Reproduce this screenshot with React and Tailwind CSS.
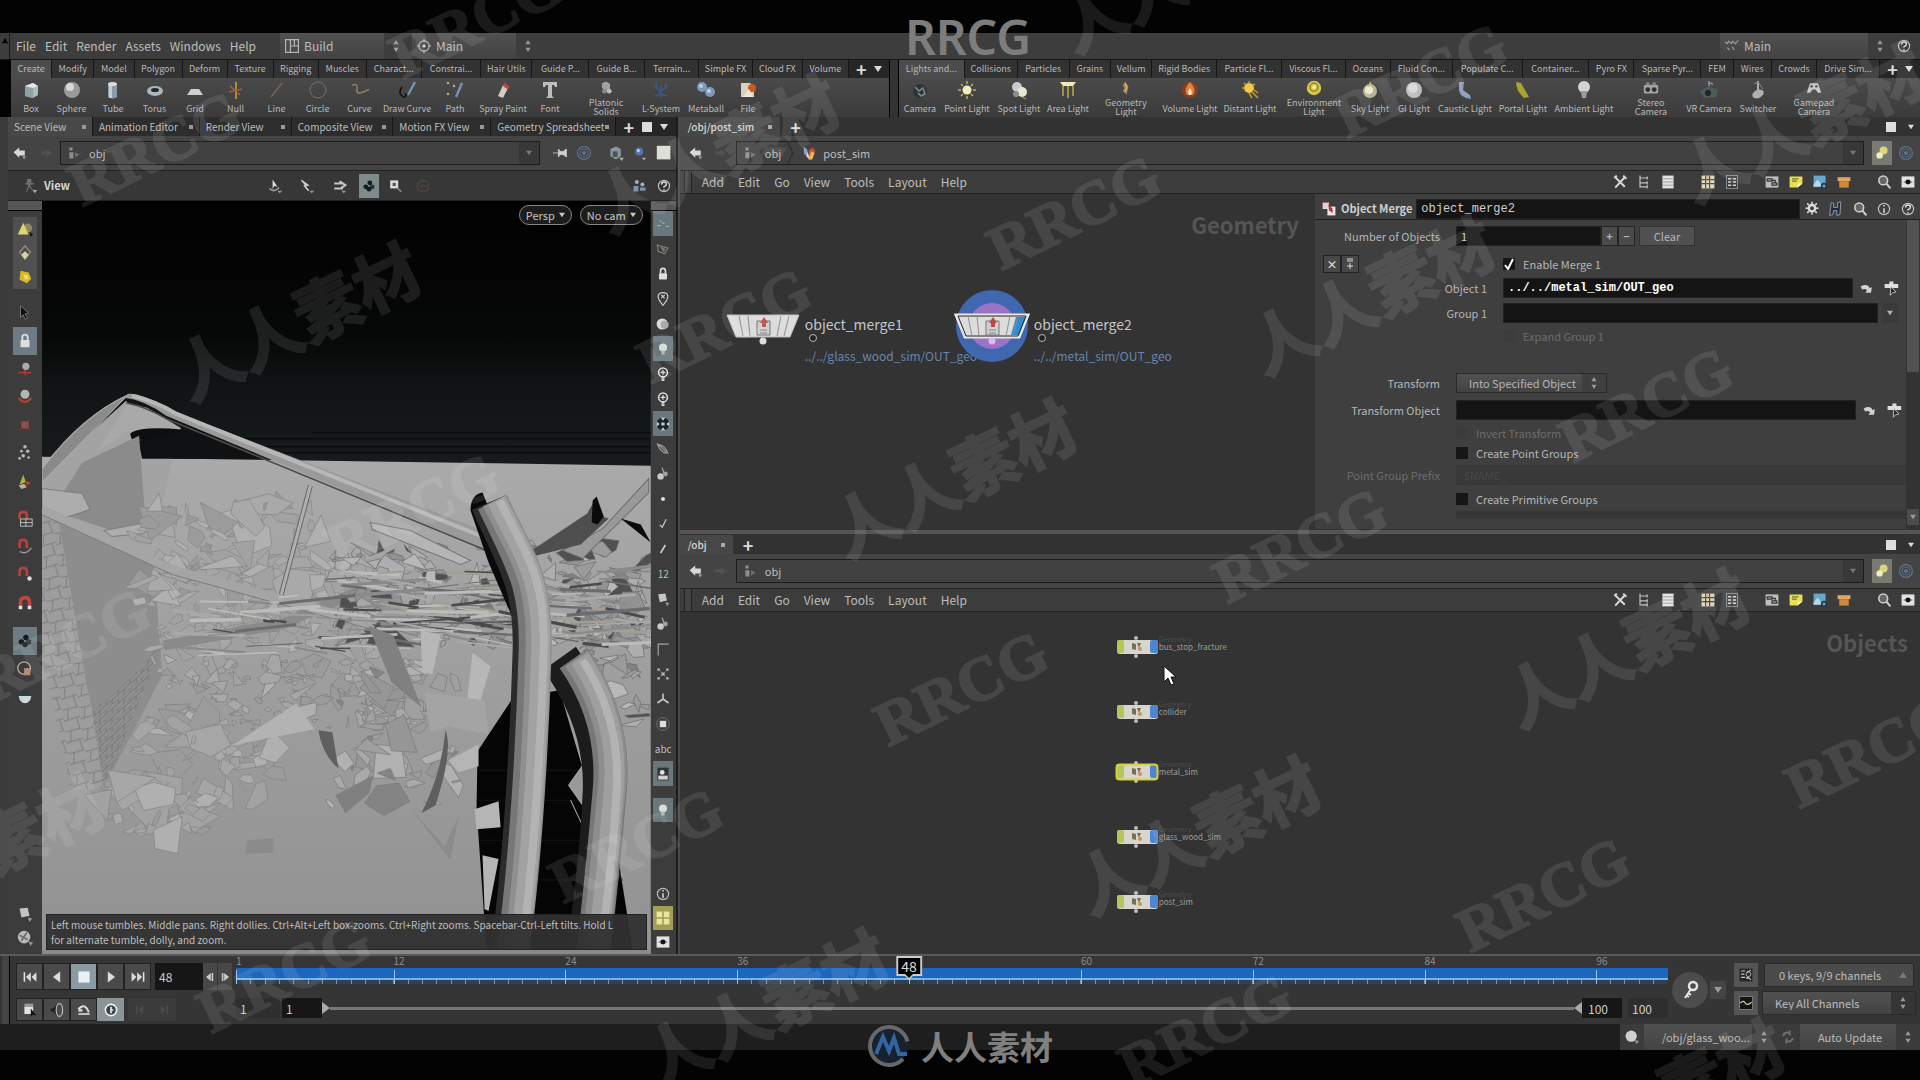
import React, { useState } from 'react';

const LEFT_SHELF_TABS = [
  ['Create', 41], ['Modify', 42], ['Model', 40], ['Polygon', 48], ['Deform', 45], ['Texture', 46],
  ['Rigging', 45], ['Muscles', 48], ['Charact...', 55], ['Constrai...', 60], ['Hair Utils', 51],
  ['Guide P...', 57], ['Guide B...', 56], ['Terrain...', 54], ['Simple FX', 54], ['Cloud FX', 50], ['Volume', 46],
];

const RIGHT_SHELF_TABS = [
  ['Lights and...', 66], ['Collisions', 53], ['Particles', 52], ['Grains', 41], ['Vellum', 41],
  ['Rigid Bodies', 65], ['Particle Fl...', 65], ['Viscous Fl...', 64], ['Oceans', 45], ['Fluid Con...', 62],
  ['Populate C...', 70], ['Container...', 67], ['Pyro FX', 45], ['Sparse Pyr...', 67], ['FEM', 32],
  ['Wires', 38], ['Crowds', 45], ['Drive Sim...', 63],
];

const LEFT_TOOLS = [
  ['Box', 40, 'box'], ['Sphere', 41, 'sphere'], ['Tube', 42, 'tube'], ['Torus', 41, 'torus'], ['Grid', 40, 'grid'],
  ['Null', 41, 'null'], ['Line', 41, 'line'], ['Circle', 41, 'circle'], ['Curve', 43, 'curve'],
  ['Draw Curve', 52, 'draw'], ['Path', 44, 'path'], ['Spray Paint', 52, 'spray'], ['Font', 42, 'font'],
  ['Platonic Solids', 70, 'platonic'], ['L-System', 40, 'lsystem'], ['Metaball', 50, 'metaball'], ['File', 34, 'file'],
];

const RIGHT_TOOLS = [
  ['Camera', 42, 'camera'], ['Point Light', 52, 'sun'], ['Spot Light', 52, 'spot'], ['Area Light', 46, 'area'],
  ['Geometry Light', 70, 'geoLight'], ['Volume Light', 58, 'flame'], ['Distant Light', 62, 'distant'],
  ['Environment Light', 66, 'env'], ['Sky Light', 46, 'sky'], ['GI Light', 42, 'gi'], ['Caustic Light', 60, 'caustic'],
  ['Portal Light', 56, 'portal'], ['Ambient Light', 66, 'bulb'], ['Stereo Camera', 68, 'stereo'],
  ['VR Camera', 48, 'vr'], ['Switcher', 50, 'switcher'], ['Gamepad Camera', 62, 'gamepad'],
];

const SCENE_TABS = [
  ['Scene View', 82], ['Animation Editor', 107], ['Render View', 90], ['Composite View', 101],
  ['Motion FX View', 97], ['Geometry Spreadsheet', 127],
];

const NETWORK_MENU = ['Add', 'Edit', 'Go', 'View', 'Tools', 'Layout', 'Help'];

const OBJECT_NODES = [
  { name: 'bus_stop_fracture', top: 27 },
  { name: 'collider', top: 92 },
  { name: 'metal_sim', top: 152, selected: true },
  { name: 'glass_wood_sim', top: 217 },
  { name: 'post_sim', top: 282 },
];

const MARKS = [
  ['RRCG', 476, 20], ['RRCG', 1420, 80], ['RRCG', 1074, 212], ['RRCG', 155, 148], ['RRCG', 724, 325],
  ['RRCG', 412, 510], ['RRCG', 1646, 404], ['RRCG', 1300, 545], ['RRCG', 64, 645], ['RRCG', 961, 688],
  ['RRCG', 1872, 750], ['RRCG', 636, 845], ['RRCG', 1543, 894], ['RRCG', 284, 975], ['RRCG', 1205, 1030],
  ['人人素材', 296, 318], ['人人素材', 952, 475], ['人人素材', 715, 150], ['人人素材', 1370, 292],
  ['人人素材', 1800, 120], ['人人素材', 1196, 832], ['人人素材', 1625, 645], ['人人素材', 764, 1005],
  ['人人素材', -20, 850], ['人人素材', 1660, 1095], ['人人素材', 1180, -30],
];

const ART = {
  box: <><path d="M4 6l8-3 5 3v9l-5 3-8-2z" fill="#aebcbf" /><path d="M4 6l8 2v10l-8-2z" fill="#8fa0a5" /><path d="M4 6l8-3 5 3-5 2z" fill="#dfe8ea" /></>,
  sphere: <><circle cx="10" cy="10" r="8" fill="#9a9a9a" /><circle cx="8" cy="7" r="4" fill="#d8d8d8" /></>,
  tube: <><path d="M5 4v13q5 3 9 0V4z" fill="#8e99a6" /><path d="M6 5h3v13H6z" fill="#c4ccd4" /><ellipse cx="9.500" cy="4" rx="4.500" ry="2" fill="#d8dde2" /></>,
  torus: <><ellipse cx="10" cy="11" rx="8" ry="5" fill="#a9b6bd" /><ellipse cx="10" cy="10" rx="4" ry="2" fill="#23282c" /></>,
  grid: <path d="M6 9h8l4 6H2z" fill="#cfcfcf" />,
  null: <g strokeWidth="1.500"><path d="M10 2v17" stroke="#d9a23a" /><path d="M3 12l13-3" stroke="#b8542f" /><path d="M4 6l10 9" stroke="#9c6a35" /></g>,
  line: <path d="M4 17L15 3" stroke="#7a6258" strokeWidth="1.500" />,
  circle: <circle cx="10" cy="10" r="8" fill="none" stroke="#707070" />,
  curve: <path d="M2 5q6-2 5 4t6 3 5-2" fill="none" stroke="#8c8365" strokeWidth="1.500" />,
  draw: <><path d="M5 7q-4 6 0 9t4-3" fill="none" stroke="#111" strokeWidth="1.500" /><path d="M18 2l-7 13" stroke="#6e93b5" strokeWidth="2.500" /></>,
  path: <><path d="M17 3l-6 14" stroke="#6e93b5" strokeWidth="2.500" /><circle cx="3" cy="3" r="1.300" fill="#b8b060" /><circle cx="9" cy="6" r="1.300" fill="#b8b060" /><circle cx="3" cy="14" r="1.300" fill="#b8b060" /></>,
  spray: <><path d="M10 5l5 3-5 10-5-2z" fill="#d6cbc6" /><path d="M11 2l6 5-3 2-4-3z" fill="#b04a44" /></>,
  font: <path d="M3 2h14v5h-2l-1-2h-2v11l2 2H6l2-2V5H6L5 7H3z" fill="#bdbdbd" />,
  platonic: <><path d="M5 4l5-2 5 3v6l-5 3-5-4z" fill="#a2a2a2" /><circle cx="8" cy="14" r="3" fill="#8a8a8a" /><circle cx="14" cy="14" r="3" fill="#bcbcbc" /></>,
  lsystem: <path d="M10 18V6M10 12L3 6M10 11l7-6M10 14l-6 2M10 14l6 2M6 8L5 3M14 8l1-5" stroke="#3a5c87" strokeWidth="1.500" fill="none" />,
  metaball: <><circle cx="6" cy="7" r="5" fill="#7c97b8" /><circle cx="14" cy="12" r="5" fill="#7c97b8" /><circle cx="5" cy="6" r="2" fill="#bed0e6" /><circle cx="13" cy="11" r="2" fill="#bed0e6" /></>,
  file: <><path d="M3 3h9l4 4v10H3z" fill="#dbd0bd" /><circle cx="14" cy="8" r="4" fill="#cc5a28" /><path d="M5 17l6-8 4 8z" fill="#efe8d8" /></>,
  camera: <><circle cx="10" cy="11" r="7" fill="#2e3538" /><path d="M5 7l4 4 4-3 2 6-4 2-3-3" stroke="#7d8c90" fill="none" strokeWidth="1.500" /></>,
  sun: <><circle cx="10" cy="10" r="4.500" fill="#f1edc0" /><path d="M10 1v3M10 16v3M1 10h3M16 10h3M4 4l2 2M14 14l2 2M16 4l-2 2M4 16l2-2" stroke="#b9b05c" strokeWidth="1.500" /></>,
  spot: <><circle cx="8" cy="7" r="5" fill="#c9c9c9" /><circle cx="13" cy="12" r="5" fill="#e8e6cf" /><circle cx="7" cy="14" r="3" fill="#8c8c8c" /><path d="M13 17l4 2" stroke="#b8a840" /></>,
  area: <><path d="M2 2h16l-3 4H5z" fill="#f0eab8" /><path d="M5 6v10M10 6v12M15 6v10" stroke="#c1a649" strokeWidth="1.500" /></>,
  geoLight: <><path d="M9 2l4 6-2 10-5-4 2-4-2-3z" fill="#a9865a" /><path d="M9 4l2 5-2 5" fill="none" stroke="#e4cda5" /></>,
  flame: <><circle cx="10" cy="10" r="8" fill="#8c3d22" /><path d="M10 2q7 7 3 13H7Q3 9 10 2z" fill="#e2843e" /><path d="M10 8q3 4 1 7H9q-2-3 1-7z" fill="#fbe8c4" /></>,
  distant: <><circle cx="9" cy="8" r="5" fill="#ecc94d" /><path d="M9 1v3M2 8h3M4 3l2 2M15 4l-2 1M12 12l6 6M9 13l3 5M14 10l4 3" stroke="#c79c2e" strokeWidth="1.500" /></>,
  env: <><circle cx="10" cy="10" r="9" fill="#d7c94a" /><circle cx="10" cy="9" r="5" fill="none" stroke="#7f7a2c" strokeWidth="1.500" /><circle cx="10" cy="9" r="2" fill="#fff8b8" /></>,
  sky: <><circle cx="10" cy="11" r="7" fill="#b8b490" /><circle cx="9" cy="10" r="4" fill="#ece9d5" /><path d="M10 1l2 5-4 1z" fill="#d0c170" /></>,
  gi: <><circle cx="10" cy="10" r="8" fill="#bcbcbc" /><circle cx="9" cy="8" r="5" fill="#dadada" /></>,
  caustic: <path d="M4 2h5l-1 8 7 5 1 4q-11-1-12-9z" fill="#8ea3bb" />,
  portal: <path d="M3 2l5 1 8 14-5 1Q3 11 3 2z" fill="#a9a433" />,
  bulb: <><circle cx="10" cy="7" r="6" fill="#d2d2d2" /><path d="M7 11h6l-1 7H8z" fill="#9d9d9d" /></>,
  stereo: <><rect x="1" y="6" width="18" height="11" rx="2" fill="#a3a3a3" /><circle cx="6" cy="12" r="3" fill="#303030" /><circle cx="14" cy="12" r="3" fill="#303030" /><path d="M4 3h4v3H4zM12 3h4v3h-4z" fill="#8d8d8d" /></>,
  vr: <><path d="M1 11l9-5 9 4-2 7-12 1z" fill="#4d5b5d" /><circle cx="9" cy="13" r="3" fill="#1f2526" /><path d="M10 6V1M10 3l4 1" stroke="#87989b" strokeWidth="1.500" /></>,
  switcher: <><path d="M10 1v9" stroke="#d0d0d0" strokeWidth="1.500" /><ellipse cx="10" cy="14" rx="6" ry="4" fill="#b0b0b0" transform="rotate(-25 10 14)" /><path d="M6 4l4-2 5 7" stroke="#888" fill="none" /></>,
  gamepad: <><path d="M5 4h10l4 12h-4l-3-4H8l-3 4H1z" fill="#c6c6c6" /><circle cx="7" cy="8" r="1.500" fill="#3a3a3a" /><circle cx="13" cy="8" r="1.500" fill="#3a3a3a" /></>,
  back: <><path d="M2 9l7-6v4h7v6H9v3z" fill="#d8d8d8" /><path d="M13 14h5l-3 4z" fill="#999" /></>,
  forward: <path d="M17 10l-6-5v3H4v4h7v3z" fill="#525252" />,
  scene: <><path d="M3 3h4v4H3zM3 9h5v8H3z" fill="#8e8e8e" /><path d="M10 9l6 3-6 4z" fill="#6d6d6d" /></>,
  geo: <><path d="M3 2l5 4v9L4 11z" fill="#8ba4cc" /><path d="M10 6l5-3 3 5-4 9-5 1z" fill="#c8502f" /><path d="M9 18l4-10 4 2-3 8z" fill="#e0bb57" /><path d="M8 8l3 9-4-2z" fill="#ddd" /></>,
  pin: <path d="M1 10h7M8 5v10l2-3h4l4 3V5l-4 3h-4z" stroke="#d0d0d0" fill="#d0d0d0" />,
  target: <g fill="none" stroke="#5b7390"><circle cx="10" cy="10" r="8" strokeWidth="1.500" /><circle cx="10" cy="10" r="5" /><circle cx="10" cy="10" r="2" fill="#5b7390" /></g>,
  cube: <><path d="M3 5l7-3 6 3v9l-6 4-7-4z" fill="#87989c" /><path d="M6 8h6v7H6z" fill="#46565c" /><path d="M14 16h6l-3 4z" fill="#aaa" /></>,
  ball: <><circle cx="9" cy="8" r="5" fill="#5474ae" /><circle cx="8" cy="7" r="2" fill="#b7caec" /><path d="M12 16h6l-3 3z" fill="#aaa" /></>,
  square: <rect x="1" y="1" width="17" height="17" fill="#deded8" />,
  walk: <><path d="M7 2h4v4H7zM4 7l5 1 6-1M9 8l-3 9M9 9l4 6" stroke="#6f6f6f" fill="#6f6f6f" strokeWidth="1.500" /><path d="M13 15h6l-3 4z" fill="#aaa" /></>,
  cursorSpin: <><path d="M7 2l6 9-4-1-2 4z" fill="#ddd" /><path d="M3 13q6 6 12-1" stroke="#999" fill="none" strokeWidth="2" /><path d="M13 16h6l-3 3z" fill="#999" /></>,
  cursorMove: <><path d="M3 3l8 6-4 1 5 6" stroke="#ccc" strokeWidth="2" fill="#ccc" /><path d="M13 16h6l-3 3z" fill="#999" /></>,
  loop: <><path d="M4 7h9l-2-3 7 5-6 4M15 13H4" stroke="#c4c4c4" fill="none" strokeWidth="2.500" /><path d="M13 16h6l-3 3z" fill="#999" /></>,
  blobs: <><circle cx="6" cy="11" r="3" fill="#171b1e" /><circle cx="11" cy="6" r="3" fill="#171b1e" /><circle cx="14" cy="11" r="3" fill="#2c3539" /><circle cx="10" cy="14" r="3" fill="#171b1e" /></>,
  zoomBox: <><rect x="4" y="3" width="10" height="10" fill="#dcdcdc" /><rect x="7" y="6" width="4" height="4" fill="#555" /><path d="M13 13l5 4" stroke="#888" strokeWidth="2" /></>,
  ghost: <><circle cx="10" cy="10" r="7" fill="none" stroke="#51403f" strokeWidth="2" /><path d="M6 10h8" stroke="#51403f" strokeWidth="2" /></>,
  people: <><circle cx="6" cy="5" r="2.500" fill="#9eb0c4" /><circle cx="13" cy="8" r="2.500" fill="#9eb0c4" /><path d="M2 10h6v7H2zM10 12h7v4h-7z" fill="#8093a8" /></>,
  cone: <><circle cx="13" cy="9" r="5" fill="#8f8a62" /><path d="M8 3l6 13H2z" fill="#e2d36c" /><path d="M15 13l4 3-3 3z" fill="#151515" /></>,
  diamond: <><path d="M10 2l6 7-6 8-6-8z" fill="none" stroke="#8f8d7c" strokeWidth="1.500" /><path d="M10 8l4 4-4 5-4-5z" fill="#ddd5a0" /></>,
  gem: <><path d="M5 3l9 2 3 7-5 5-8-4z" fill="#d7b82a" /><path d="M8 7l5 1 1 4-4 1z" fill="#f1dc66" /></>,
  arrow: <path d="M5 2l9 8-4 1 3 5-3 1-2-5-3 3z" fill="#111" stroke="#777" />,
  lock: <><rect x="5" y="9" width="10" height="8" rx="1" fill="#dedede" /><path d="M7 9V6q0-3 3-3t3 3v3" stroke="#dedede" fill="none" strokeWidth="2" /></>,
  move: <><path d="M3 14h14M10 8v9" stroke="#a63a30" strokeWidth="2" /><circle cx="11" cy="7" r="4" fill="#aaa" /></>,
  rotate: <><path d="M3 11q6 9 14 0" stroke="#a9442f" strokeWidth="2.500" fill="none" /><circle cx="10" cy="7" r="5" fill="#b4b4b4" /></>,
  scale: <><path d="M4 5l12 10M4 16L15 4" stroke="#7c302b" strokeWidth="2" /><rect x="6" y="6" width="8" height="8" fill="#8a5049" /></>,
  dots: <g fill="#b5b5b5"><circle cx="10" cy="3" r="2" /><circle cx="6" cy="8" r="1.500" /><circle cx="13" cy="8" r="2" /><circle cx="8" cy="13" r="2" /><circle cx="14" cy="15" r="1.500" /><circle cx="4" cy="16" r="1.500" /></g>,
  prism: <><path d="M8 3l3 8-7 3z" fill="#a7b83a" /><path d="M10 10l7 2-5 3z" fill="#c3402c" /><path d="M3 15l6-2 3 4-6 2z" fill="#b5b5a0" /></>,
  magnetGrid: <><path d="M4 10V6q0-4 4-4t4 4v4" stroke="#b8413a" strokeWidth="3" fill="none" /><path d="M5 10h13v8H5zM5 14h13M11 10v8" stroke="#c7c7c7" fill="none" /></>,
  magnetCurve: <><path d="M4 11V6q0-4 4-4t4 4v5" stroke="#b8413a" strokeWidth="3" fill="none" /><path d="M4 15q8 4 13-4" stroke="#999" fill="none" strokeWidth="1.500" /></>,
  magnetDot: <><path d="M4 11V6q0-4 4-4t4 4v5" stroke="#b8413a" strokeWidth="3" fill="none" /><circle cx="15" cy="14" r="2.500" fill="#ddd" /></>,
  magnet: <><path d="M5 14V9q0-5 5-5t5 5v5" stroke="#c2443c" strokeWidth="4" fill="none" /><path d="M3 13h4v4H3zM13 13h4v4h-4z" fill="#ddd" /></>,
  inspect: <><circle cx="9" cy="9" r="7" fill="none" stroke="#b5a79c" strokeWidth="1.500" /><path d="M9 9h7v8H9z" fill="#b98a7c" /></>,
  bowl: <><path d="M3 9h14q-1 8-7 8T3 9z" fill="#ced8d6" /><path d="M7 2h6l2 6H5z" fill="#2c3c3c" /></>,
  chip: <><path d="M4 4l9-1 2 9-9 2z" fill="#c4c4c4" /><path d="M13 14l5 1-3 4z" fill="#999" /></>,
  wheel: <><circle cx="9" cy="9" r="7" fill="#b9b9b9" /><path d="M4 7l9 5M12 4l-6 9" stroke="#707070" strokeWidth="2" /><path d="M14 14l5 1-3 4z" fill="#999" /></>,
  plane: <><path d="M3 5l13 4-4 7-8-3z" fill="none" stroke="#7b8476" strokeWidth="1.500" /><path d="M6 7l7 3-2 4z" fill="#7b8476" /></>,
  dash: <path d="M3 12h4M9 9h3M14 13h3M6 6l2 1" stroke="#9fb4bd" strokeWidth="1.500" />,
  marker: <><path d="M10 18Q4 11 4 7q0-5 6-5t6 5q0 4-6 11z" fill="none" stroke="#c9c9c9" strokeWidth="1.500" /><path d="M8 5l4 4M12 5L8 9" stroke="#c9c9c9" strokeWidth="1.500" /></>,
  moon: <><circle cx="9" cy="10" r="7" fill="#dadada" /><circle cx="12" cy="11" r="5" fill="#aaa" /></>,
  lamp: <><circle cx="10" cy="8" r="5" fill="#d8ddda" /><path d="M8 12h4v5H8z" fill="#b0b6b4" /></>,
  plusLamp: <><circle cx="10" cy="8" r="5.500" fill="none" stroke="#dcdcdc" strokeWidth="2" /><path d="M7 8h6M10 5v6M9 14h2v4H9z" stroke="#dcdcdc" strokeWidth="1.500" /></>,
  checker: <><circle cx="10" cy="10" r="8" fill="#1b2124" /><path d="M7 2h6l-3 4zM7 18h6l-3-4zM2 7v6l4-3zM18 7v6l-4-3zM8 8h4v4H8z" fill="#c0ccd0" /></>,
  leaf: <path d="M3 4q9 1 13 11-8 1-13-11zM5 5l9 9" fill="none" stroke="#9a9a9a" strokeWidth="1.500" />,
  cluster: <><circle cx="7" cy="13" r="4" fill="#c9c9c9" /><circle cx="13" cy="10" r="3" fill="#a0a0a0" /><path d="M9 2l2 7" stroke="#aaa" strokeWidth="1.500" /></>,
  dot: <circle cx="10" cy="10" r="2.500" fill="#e0e0e0" />,
  tick: <path d="M6 11l3 3 5-10" stroke="#cfcfcf" fill="none" strokeWidth="1.500" />,
  slash: <path d="M7 15l6-10" stroke="#cfcfcf" strokeWidth="2" />,
  corner: <path d="M4 18V4h13" stroke="#a5a5a5" fill="none" strokeWidth="1.500" />,
  nodes: <><path d="M4 4l12 12M16 4L4 16" stroke="#777" /><g fill="#b5b5b5"><path d="M3 3h3v3H3zM14 3h3v3h-3zM3 14h3v3H3zM14 14h3v3h-3zM8 8h4v4H8z" /></g></>,
  tri: <path d="M10 10V3M10 10l7 5M10 10l-7 5" stroke="#c9c9c9" strokeWidth="2" />,
  disc: <><circle cx="10" cy="10" r="8" fill="none" stroke="#777" /><rect x="6" y="6" width="8" height="8" fill="#dcdcdc" /></>,
  ghostBox: <><rect x="3" y="2" width="14" height="16" fill="#2d373b" /><circle cx="9" cy="8" r="3" fill="#e0e0e0" /><path d="M4 12h12v5H4z" fill="#cfcfcf" /></>,
  gold: <><rect x="2" y="2" width="7" height="7" fill="#e9e4a0" /><rect x="11" y="2" width="7" height="7" fill="#e9e4a0" /><rect x="2" y="11" width="7" height="7" fill="#e9e4a0" /><rect x="11" y="11" width="7" height="7" fill="#e9e4a0" /></>,
  eye: <><rect x="2" y="3" width="16" height="14" fill="#e2e2e2" /><path d="M4 10q6-5 12 0-6 5-12 0z" fill="#8f8f8f" /><circle cx="10" cy="10" r="3" fill="#111" /></>,
  info: <><circle cx="10" cy="10" r="7" fill="none" stroke="#bdbdbd" strokeWidth="1.500" /><path d="M10 5v2M10 9v6" stroke="#d0d0d0" strokeWidth="2" /></>,
  help: <><circle cx="10" cy="10" r="7" fill="none" stroke="#bdbdbd" strokeWidth="1.500" /><path d="M7 8q0-3 3-3t3 2.500-3 3.500v1M10 14v2" stroke="#e0e0e0" strokeWidth="1.800" fill="none" /></>,
  tools: <path d="M3 3l13 13M4 17L16 4M3 5l3-3M14 2l4 4" stroke="#d8d8d8" strokeWidth="2.500" />,
  tree: <path d="M5 2v15M5 5h9M5 11h9M5 16h9M14 3v4M14 9v4M14 14v4" stroke="#c2c2c2" fill="none" strokeWidth="1.500" />,
  list: <><rect x="3" y="2" width="14" height="16" fill="#e3e3e3" /><path d="M3 6h14M3 10h14M3 14h14" stroke="#8a8a8a" /></>,
  palette: <><rect x="2" y="2" width="16" height="16" fill="#dbd6bd" /><path d="M2 7h16M2 12h16M7 2v16M12 2v16" stroke="#4a4536" strokeWidth="1.500" /><path d="M8 3h3v3H8z" fill="#e6a85a" /></>,
  cells: <><rect x="3" y="2" width="14" height="16" fill="none" stroke="#9d9d9d" /><path d="M5 5h4v2H5zM11 5h4v2h-4zM5 9h4v2H5zM11 9h4v2h-4zM5 13h4v2H5zM11 13h4v2h-4z" fill="#d5d5d5" /></>,
  netbox: <><rect x="2" y="3" width="16" height="14" fill="#bdbdbd" /><path d="M4 6h6v3H4zM10 11h6v3h-6zM10 8h4v3" stroke="#333" fill="none" strokeWidth="1.500" /></>,
  sticky: <><path d="M2 3h16v9l-6 5H2z" fill="#e6df57" /><path d="M5 6h8M5 9h6" stroke="#78732c" strokeWidth="1.500" /><path d="M12 17v-5h6z" fill="#fbf8c0" /></>,
  image: <><rect x="2" y="2" width="15" height="14" fill="#67a5cb" /><path d="M2 13l5-6 5 6 2-2 3 3v2H2z" fill="#b7d6e6" /><circle cx="15" cy="15" r="4" fill="#20394c" /><path d="M15 13v4M13 15h4" stroke="#b7d6e6" /></>,
  crate: <><path d="M2 4h16v5H2z" fill="#e2a75a" /><path d="M4 9h12v8H4z" fill="#cd8a3c" /></>,
  search: <><circle cx="9" cy="8" r="5.500" fill="#666" stroke="#d0d0d0" strokeWidth="2" /><path d="M13 12l5 6" stroke="#d0d0d0" strokeWidth="2.500" /></>,
  link: <><circle cx="12" cy="7" r="5" fill="#d9d67c" /><circle cx="7" cy="13" r="4" fill="#f0edc0" /></>,
  merge: <><rect x="2" y="2" width="8" height="8" fill="#e4d2d0" /><rect x="8" y="7" width="10" height="11" fill="#e8e8e8" /><path d="M9 4l5 5 1 6-5-3z" fill="#b3343b" /></>,
  gear: <><circle cx="10" cy="9" r="4" fill="none" stroke="#dedede" strokeWidth="3" /><path d="M10 1v3M10 14v3M2 9h3M15 9h3M4 3l2 2M14 13l2 2M16 3l-2 2M4 15l2-2" stroke="#dedede" strokeWidth="2" /></>,
  houdini: <path d="M4 2l3 1v5h5V2l4-1-1 16-4 1v-6H7l-1 5-4 1z" fill="#252d38" stroke="#9eb3ca" />,
  jump: <path d="M2 8q9-4 11 2l3-1-1 7H8l2-3q-2-3-6-1z" fill="#d2d2d2" />,
  pick: <><path d="M2 5h6V2h5v3h6v5H2z" fill="#dedede" /><path d="M10 8l6 7-4 1-3 3z" fill="#222" stroke="#ddd" /></>,
  desktop: <path d="M2 2h16v16H2zM8 2v16M8 10h10M13 2v8" stroke="#b5b5b5" fill="none" strokeWidth="1.500" />,
  radial: <><circle cx="10" cy="10" r="6.500" fill="none" stroke="#b5b5b5" strokeWidth="1.500" /><circle cx="10" cy="10" r="2" fill="#d0d0d0" /><path d="M10 1v4M10 15v4M1 10h4M15 10h4" stroke="#b5b5b5" strokeWidth="1.500" /></>,
  clapper: <path d="M1 5l3 2 2-3 3 3 2-3 3 3 4-4M4 12l3 3M10 11l3 4" stroke="#999" fill="none" strokeWidth="1.500" />,
  first: <path d="M2 4h2v12H2zM11 4v12l-6-6zM18 4v12l-6-6z" fill="#dedede" />,
  play: <path d="M6 3l9 7-9 7z" fill="#dedede" />,
  reverse: <path d="M14 3l-9 7 9 7z" fill="#dedede" />,
  last: <path d="M16 4h2v12h-2zM9 4v12l6-6zM2 4v12l6-6z" fill="#dedede" />,
  stop: <rect x="3" y="3" width="14" height="14" fill="#e9f0f3" />,
  stepBack: <path d="M11 5v10l-6-5zM12 5h2v10h-2z" fill="#ccc" />,
  stepNext: <path d="M9 5v10l6-5zM6 5h2v10H6z" fill="#ccc" />,
  record: <><rect x="3" y="2" width="11" height="4" fill="#999" /><rect x="3" y="6" width="11" height="9" fill="#e4e4e4" /><path d="M11 8l7 9-5-1-2 3z" fill="#111" /></>,
  sound: <><path d="M2 8h3l5-5v14l-5-5H2z" fill="#222" /><ellipse cx="13" cy="10" rx="4" ry="8" fill="none" stroke="#bdbdbd" strokeWidth="1.500" /></>,
  realtime: <><path d="M3 14h14v2H3z" fill="#dedede" /><path d="M3 9q8-9 13 4" stroke="#dedede" strokeWidth="2.500" fill="none" /><path d="M3 9h5v3H3z" fill="#dedede" /></>,
  clock: <><circle cx="10" cy="10" r="7" fill="#3c4246" stroke="#eef2f4" strokeWidth="2" /><path d="M10 6v8M10 10h3" stroke="#eef2f4" strokeWidth="2" /></>,
  prevKey: <path d="M5 5h2v10H5zM14 5v10l-6-5z" fill="#4c4c4c" />,
  nextKey: <path d="M13 5h2v10h-2zM6 5v10l6-5z" fill="#4c4c4c" />,
  key: <><circle cx="13" cy="6" r="4" fill="none" stroke="#e6e6e6" strokeWidth="2.500" /><path d="M11 9l-6 9M8 13l3 2M6 15l3 2" stroke="#e6e6e6" strokeWidth="2" /></>,
  scope: <><rect x="2" y="2" width="16" height="16" fill="#262626" /><path d="M4 5h5M4 9h4M4 13h5M11 7l5-3M12 12l4 4M10 14h4" stroke="#cacaca" strokeWidth="1.500" /><circle cx="13" cy="9" r="3" fill="none" stroke="#cacaca" /></>,
  graph: <><rect x="2" y="2" width="16" height="16" fill="#141414" stroke="#888" /><path d="M3 10q4-4 6 0t8-1" stroke="#d5cfa9" fill="none" strokeWidth="1.500" /></>,
  brain: <><circle cx="9" cy="9" r="7" fill="#cfcfcf" /><path d="M14 14l5 1-4 4z" fill="#999" /></>,
  refresh: <path d="M4 9q1-6 8-4M16 11q-1 6-8 4M12 2v6M8 12v6" stroke="#6e6e6e" fill="none" strokeWidth="2.500" />,
};

const Art = ({ name, className = 'size-4' }) => (
  <svg viewBox="0 0 20 20" className={`shrink-0 ${className}`} aria-hidden="true">{ART[name]}</svg>
);

const IconButton = ({ name, label, className = 'size-6', art = 'size-4' }) => (
  <button type="button" aria-label={label || name} className={`flex shrink-0 items-center justify-center ${className}`}>
    <Art name={name} className={art} />
  </button>
);

const UpDown = () => (
  <svg viewBox="0 0 8 14" className="h-3 w-2 shrink-0" aria-hidden="true">
    <path d="M4 0l3 5H1zM4 14l3-5H1z" fill="#999" />
  </svg>
);

const Down = ({ className = 'w-2' }) => (
  <svg viewBox="0 0 8 6" className={`h-2 shrink-0 ${className}`} aria-hidden="true"><path d="M0 0h8L4 6z" fill="currentColor" /></svg>
);

// Drop-down with the double arrow on its right side
const Picker = ({ label, value, icon, className, pad = 'pl-2' }) => (
  <div className={`flex items-center ${className}`}>
    <div className="flex h-full min-w-0 flex-1 items-center bg-linear-to-b from-[#515151] to-[#434343] pl-1">
      {icon && <Art name={icon} />}
      <select aria-label={label} className={`h-full min-w-0 flex-1 appearance-none bg-transparent outline-none ${pad}`}>
        <option>{value}</option>
      </select>
    </div>
    <span className="flex w-6 justify-center"><UpDown /></span>
  </div>
);

const MenuBar = () => (
  <header className="flex h-[26px] items-center bg-[#3d3d3d] text-xs">
    <div className="flex h-full w-2.5 shrink-0 justify-center border-r border-[#1a1a1a] pt-1">
      <svg viewBox="0 0 8 8" className="h-2 w-1.5"><path d="M4 0l4 7H0z" /></svg>
    </div>
    <nav className="flex gap-[9px] pl-1.5">
      {['File', 'Edit', 'Render', 'Assets', 'Windows', 'Help'].map((item) => <button type="button" key={item}>{item}</button>)}
    </nav>
    <Picker label="Desktop" value="Build" icon="desktop" className="ml-6 h-full w-32" pad="pl-1" />
    <Picker label="Radial menu" value="Main" icon="radial" className="ml-1 h-full w-32" pad="pl-1" />
    <div className="flex-1" />
    <Picker label="Take" value="Main" icon="clapper" className="h-full w-[172px]" pad="pl-1" />
    <IconButton name="help" label="Help" className="mr-1 size-6" />
  </header>
);

const Shelf = ({ tabs, tools, tail }) => {
  const [active, setActive] = useState(0);
  return (
    <div className="flex min-w-0 flex-1 flex-col">
      <div className="flex h-[18px] bg-[#262626]">
        {tabs.map(([name, width], i) => (
          <button
            type="button"
            key={name}
            onClick={() => setActive(i)}
            style={{ flexGrow: width }}
            className={`min-w-0 basis-0 overflow-hidden border-r border-[#161616] text-center leading-4 whitespace-nowrap ${
              i === active ? 'bg-[#4c4c4c]' : 'bg-[#323232]'
            }`}
          >
            {name}
          </button>
        ))}
        <div className="flex w-10 shrink-0 items-center justify-evenly text-[#ddd]">
          <button type="button" aria-label="Add shelf" className="text-lg leading-4 font-bold">+</button>
          <Down />
        </div>
      </div>
      <div className="flex h-10 bg-linear-to-b from-[#4a4a4a] to-[#3b3b3b]">
        {tools.map(([name, width, icon]) => {
          const split = ['Platonic Solids', 'Geometry Light', 'Environment Light', 'Stereo Camera', 'Gamepad Camera'].includes(name);
          return (
            <button type="button" key={name} style={{ flexGrow: width }} className="flex min-w-0 basis-0 flex-col items-center pt-0.5 leading-[9px]">
              <Art name={icon} className={split ? 'size-4' : 'size-5'} />
              {split ? (
                <span className="pt-0.5">{name.split(' ')[0]}<br />{name.split(' ')[1]}</span>
              ) : (
                <span className="pt-1 whitespace-nowrap">{name}</span>
              )}
            </button>
          );
        })}
        <div style={{ flexGrow: tail }} className="basis-0" />
      </div>
    </div>
  );
};

const Shelves = () => (
  <section className="flex h-[58px] shrink-0 border-t border-[#151515] text-[9px] text-[#b8b8b8]">
    <div className="flex w-[46.3%] pl-[11px]"><Shelf tabs={LEFT_SHELF_TABS} tools={LEFT_TOOLS} tail={124} /></div>
    <div className="w-2.5 shrink-0 border-x border-black bg-[#333]" />
    <Shelf tabs={RIGHT_SHELF_TABS} tools={RIGHT_TOOLS} tail={75} />
  </section>
);

const PathBox = ({ crumbs }) => (
  <div className="flex h-6 min-w-0 flex-1 items-center border border-[#1c1c1c] bg-[#414141] pl-1.5 text-[11px]">
    {crumbs.map(([icon, text], i) => (
      <React.Fragment key={text}>
        {i > 0 && (
          <svg viewBox="0 0 8 24" className="mx-1.5 h-6 w-2"><path d="M0 0l6 12-6 12" fill="none" stroke="#262626" /></svg>
        )}
        <Art name={icon} />
        <button type="button" className="pl-1.5">{text}</button>
      </React.Fragment>
    ))}
    <div className="flex-1" />
    <span className="flex h-full w-5 items-center justify-center bg-[#383838] text-[#777]"><Down className="w-1.5" /></span>
  </div>
);

const rand = (seed) => {
  let s = seed;
  return () => {
    s = (s * 1664525 + 1013904223) % 4294967296;
    return s / 4294967296;
  };
};

// Broken glass and wood: irregular flat pieces scattered inside a box, many small and a few large
const shards = (seed, count, [x, y, w, h], size, tones, edge) => {
  const r = rand(seed);
  return Array.from({ length: count }, () => {
    const cx = x + r() * w;
    const cy = y + r() * h;
    const tilt = r() * 3.14;
    const long = size * (0.3 + r() * r() * 1.8);
    const squash = 0.18 + r() * 0.7;
    const corners = 3 + Math.floor(r() * 3);
    const pts = Array.from({ length: corners }, (_, i) => {
      const t = ((i + r() * 0.7) / corners) * 6.28;
      const px = Math.cos(t) * long;
      const py = Math.sin(t) * long * squash;
      return `${(cx + px * Math.cos(tilt) - py * Math.sin(tilt)).toFixed(1)},${(cy + (px * Math.sin(tilt) + py * Math.cos(tilt)) * 0.8).toFixed(1)}`;
    });
    return { pts: pts.join(' '), fill: tones[Math.floor(r() * tones.length)], edge };
  });
};

// Long planks and cables lying almost level
const planks = (seed, count, [x, y, w, h]) => {
  const r = rand(seed);
  return Array.from({ length: count }, () => {
    const cx = x + r() * w;
    const cy = y + r() * h;
    const len = 20 + r() * 70;
    const tone = ['#bcbcbc', '#8a8a8a', '#6c6c6c', '#a9a9a9', '#a39f96', '#4a4a4a'][Math.floor(r() * 6)];
    return { d: `M${cx.toFixed(0)} ${cy.toFixed(0)}l${len.toFixed(0)} ${((r() - 0.35) * len * 0.35).toFixed(0)}`, tone, width: 1 + r() * 2.5 };
  });
};

const LIGHT = ['#a9a9a9', '#b0b0b0', '#a2a2a2', '#a6a6a6', '#9b9b9b'];
const MIXED = ['#b8b8b8', '#a8a8a8', '#929292', '#9b9b9b', '#505050', '#aeaeae', '#828282'];

const DEBRIS = [
  ...shards(5, 60, [90, 300, 190, 90], 22, LIGHT, '#858585'),
  ...shards(31, 120, [95, 360, 240, 90], 18, LIGHT, '#848484'),
  ...shards(12, 190, [290, 345, 316, 100], 14, MIXED, '#6c6c6c'),
  ...shards(8, 160, [110, 460, 270, 70], 11, LIGHT, '#7c7c7c'),
  ...shards(22, 55, [95, 520, 140, 80], 22, LIGHT, '#848484'),
  ...shards(14, 40, [60, 575, 120, 60], 18, LIGHT, '#848484'),
  ...shards(44, 50, [285, 470, 145, 140], 17, ['#a9a9a9', '#969696', '#848484', '#b1b1b1', '#9f9f9f'], '#7a7a7a'),
  ...shards(71, 50, [540, 380, 66, 150], 14, MIXED, '#6c6c6c'),
];

const PLANKS = [...planks(3, 110, [280, 370, 290, 75]), ...planks(9, 30, [120, 395, 160, 60])];

const SceneDrawing = () => (
  <svg viewBox="0 0 608 750" preserveAspectRatio="none" className="absolute inset-0 size-full" aria-hidden="true">
    <defs>
      <linearGradient id="sky" x1="0" y1="0" x2="0" y2="1">
        <stop offset="0" stopColor="#020202" />
        <stop offset="0.500" stopColor="#060707" />
        <stop offset="0.700" stopColor="#111415" />
        <stop offset="1" stopColor="#181b1d" />
      </linearGradient>
      <linearGradient id="ground" x1="0" y1="0" x2="0" y2="1">
        <stop offset="0" stopColor="#aaaaaa" />
        <stop offset="0.500" stopColor="#9d9d9d" />
        <stop offset="1" stopColor="#929292" />
      </linearGradient>
      <pattern id="mesh" width="12" height="9" patternUnits="userSpaceOnUse" patternTransform="skewY(-42)">
        <path d="M0 0h12M0 4.500h12M4 0v4.500M10 4.500v4.500" stroke="#767676" strokeWidth="1" fill="none" />
      </pattern>
      <pattern id="bricks" width="17" height="22" patternUnits="userSpaceOnUse" patternTransform="rotate(-8)">
        <path d="M0 2l17-2M0 13l17-3M6 1l-2 11M13 11l2 11" stroke="#7d7d7d" strokeWidth="1" fill="none" />
      </pattern>
    </defs>
    <rect width="608" height="268" fill="url(#sky)" />
    <path d="M190 238h418M150 246h458M110 252h498M270 232h338" stroke="#0a0c0c" strokeWidth="1.500" />
    <path d="M0 256L608 265V750H0z" fill="url(#ground)" />

    <path d="M84 200L0 276V340L110 345 130 260z" fill="#a3a3a3" />
    <path d="M85 203l20 4 40 24-60 0-30 20z" fill="#a9a9a9" />
    <path d="M88 233q10-8 52-4l-10 14-32-4-2 20z" fill="#0d0e0f" />
    <path d="M96 240l4 18h120L142 222l-6 10z" fill="#0f1112" />
    <path d="M97 235L104 330 98 333 70 330 10 310 40 262z" fill="#8b8b8b" />
    <path d="M2 310l110 55 8 110-58 112-10-70z" fill="#8d8d8d" />
    <path d="M122 440L62 588 50 510q40-30 72-70z" fill="#8f8f8f" />
    <path d="M122 440L62 588 50 510q40-30 72-70z" fill="url(#mesh)" />
    <path d="M0 310l16 6 46 272-32 2L0 455z" fill="#9d9d9d" />
    <path d="M0 310l16 6 46 272-32 2L0 455z" fill="url(#bricks)" />
    <path d="M0 288l40 5 8 16-30 10-18-6zM62 330l42-8-2 11-32 3z" fill="#adadad" stroke="#7d7d7d" />

    {DEBRIS.slice(0, 180).map((d) => <polygon key={d.pts} points={d.pts} fill={d.fill} stroke={d.edge} strokeWidth="0.700" />)}
    <path d="M122 445l120-22 80-35" stroke="#8a8a8a" strokeWidth="10" fill="none" />
    <path d="M0 309l130 60 200 55 278 12" stroke="#a5a5a5" strokeWidth="9" fill="none" />
    <path d="M0 314l130 60 200 55 278 12" stroke="#7e7e7e" fill="none" />
    {DEBRIS.slice(180).map((d) => <polygon key={d.pts} points={d.pts} fill={d.fill} stroke={d.edge} strokeWidth="0.700" />)}
    {PLANKS.map((p) => <path key={p.d} d={p.d} stroke={p.tone} strokeWidth={p.width} />)}

    <path d="M190 545l64-42 18 26-62 12z" fill="#b3b3b3" />
    <path d="M276 530q4 25 20 38l-6-36zM403 530q8 20-10 75l-14 8q20-40 24-83z" fill="#5f5f5f" />
    <path d="M293 595l38-20-4 18-24 20zM326 425l25 10 28 72-30-25z" fill="#808080" />
    <path d="M378 430l20 4-8 40-10-2zM430 452l18 14-10 34-14 4z" fill="#b7b7b7" />
    <path d="M382 492l60 8 4 34-40-8-18 6z" fill="#a4a4a4" />
    <path d="M368 608l34 38 14-30-8 44zM205 640l26-2v14l-28 2z" fill="#8b8b8b" />
    <path d="M520 350l40-22 46-50v14L540 358z" fill="#999" stroke="#6d6d6d" />
    <path d="M486 352l60-40 20 6-28 26-48 12zM545 312l8-14 8 18-14 10z" fill="#4e4e4e" />
    <path d="M550 300l4-4 7 20-6 8-6-2zM578 318l20 6 10 18z" fill="#0b0b0b" />
    <path d="M328 322l40 8 60 30-10 4-88-35z" fill="#b5b5b5" stroke="#777" />

    <path d="M470 498L435 551 434 608 444 750H608L576 661 539 565 517 490z" fill="#050505" />
    <path d="M576 661l32 70v19h-18z" fill="#959595" />
    <path d="M436 570h110M434 600h115M438 640h130M440 680h140M520 470l30 130" stroke="#151515" />
    <path d="M432 609l24-8 2 26-24 2zM440 655l16 4-10 52-4-2zM406 560l30-16v22l-20 6z" fill="#b5b5b5" />
    <path d="M526 585l14-20v40zM528 600l14 30" fill="#999" stroke="#aaa" />

    <path d="M86 194L0 282V268Q40 215 86 194z" fill="#8a8a8a" stroke="#b0b0b0" />
    <path d="M82 197q20 2 42 18L446 350l10-14L130 210Q100 192 86 193z" fill="#9a9a9a" />
    <path d="M90 195q25 6 44 18L450 340" stroke="#b7b7b7" strokeWidth="4" fill="none" />
    <path d="M84 202q20 4 40 16l320 132" stroke="#4d4d4d" strokeWidth="1.500" fill="none" />
    <path d="M268 285L239 394" stroke="#666" strokeWidth="5" />
    <path d="M268 285L239 394" stroke="#b0b0b0" strokeWidth="3" />

    <path d="M517 458q46 64 43 134t-16 158" stroke="#1c1c1c" strokeWidth="40" fill="none" />
    <path d="M531 458q42 60 36 132t-16 160" stroke="#777" strokeWidth="34" fill="none" />
    <path d="M534 458q42 60 35 132t-16 160" stroke="#8d8d8d" strokeWidth="28" fill="none" />
    <path d="M537 458q40 60 34 132t-16 160" stroke="#9f9f9f" strokeWidth="20" fill="none" />
    <path d="M540 460q38 58 34 130t-16 160" stroke="#b3b3b3" strokeWidth="8" fill="none" />
    <path d="M428 310q0-16 12-18l20 50 20 110-8-30-26-60z" fill="#0a0a0a" />
    <path d="M446 302c26 60 44 80 42 150s-8 200-22 300" stroke="#2b2b2b" strokeWidth="36" fill="none" />
    <path d="M450 302c28 60 44 80 42 150s-8 200-22 300" stroke="#777" strokeWidth="32" fill="none" />
    <path d="M452 300c30 60 46 80 44 150s-8 200-22 300" stroke="#8f8f8f" strokeWidth="26" fill="none" />
    <path d="M454 300c30 60 46 80 44 150s-8 200-22 300" stroke="#a2a2a2" strokeWidth="19" fill="none" />
    <path d="M457 300c30 60 46 80 44 150s-8 200-22 300" stroke="#b3b3b3" strokeWidth="8" fill="none" />
  </svg>
);

const LEFT_BAR = [
  ['select', 'h-6', ['cone', 'diamond', 'gem'], null],
  ['handles', 'h-7', ['arrow', 'lock', 'move', 'rotate', 'scale', 'dots', 'prism'], 'lock'],
  ['snaps', 'h-7', ['magnetGrid', 'magnetCurve', 'magnetDot', 'magnet'], null],
  ['views', 'h-7', ['blobs', 'inspect', 'bowl'], 'blobs'],
];

const RIGHT_BAR = [
  'dash', 'plane', 'lock', 'marker', 'moon', 'lamp', 'plusLamp', 'plusLamp', 'checker', 'leaf', 'cluster', 'dot',
  'tick', 'slash', '12', 'chip', 'cluster', 'corner', 'nodes', 'tri', 'disc', 'abc', 'ghostBox',
];
const RIGHT_ON = ['dash', 'lamp', 'checker', 'ghostBox'];

const ScenePane = () => {
  const [active, setActive] = useState('Scene View');
  return (
    <section className="flex w-[35.3%] shrink-0 flex-col border-r-2 border-[#1c1c1c] bg-[#3b3b3b] pl-2">
      <div className="flex h-[19px] bg-[#262626] text-[10px]">
        {SCENE_TABS.map(([name, width]) => (
          <button
            type="button"
            key={name}
            onClick={() => setActive(name)}
            style={{ flexGrow: width }}
            className={`flex basis-0 items-center justify-between border-r border-[#161616] px-1.5 whitespace-nowrap ${
              name === active ? 'bg-[#484848]' : 'bg-[#2d2d2d]'
            }`}
          >
            {name}
            <span className="size-1 bg-[#999]" />
          </button>
        ))}
        <div className="flex w-[60px] shrink-0 items-center justify-evenly text-[#ddd]">
          <button type="button" aria-label="New tab" className="text-lg leading-4 font-bold">+</button>
          <span className="size-2.5 bg-[#ddd]" />
          <Down />
        </div>
      </div>
      <div className="flex h-[34px] items-center bg-[#444]">
        <IconButton name="back" label="Back" className="h-6 w-6" />
        <IconButton name="forward" label="Forward" className="h-6 w-7" />
        <PathBox crumbs={[['scene', 'obj']]} />
        <IconButton name="pin" label="Pin" className="ml-2 size-6" />
        <IconButton name="target" label="Follow" className="size-6" />
        <IconButton name="cube" label="Geometry" className="ml-2 size-6" />
        <IconButton name="ball" label="Material" className="size-6" />
        <IconButton name="square" label="Layout" className="size-6" />
      </div>
      <div className="flex h-[31px] items-center border-y border-[#222] bg-[#373737] pl-3.5">
        <Art name="walk" />
        <span className="pl-1.5 text-[11px] font-bold text-[#d5d5d5]">View</span>
        <div className="flex flex-1 items-center justify-center gap-2">
          <IconButton name="cursorSpin" />
          <IconButton name="cursorMove" />
          <IconButton name="loop" />
          <IconButton name="blobs" className="h-6 w-5 bg-[#7f8a8c]" />
          <IconButton name="zoomBox" className="size-4" />
          <IconButton name="ghost" />
        </div>
        <IconButton name="people" />
        <IconButton name="help" label="Help" />
      </div>
      <div className="flex min-h-[600px] flex-1">
        <div className="flex w-[34px] shrink-0 flex-col items-center bg-[#3c3c3c] pb-1">
          <div className="mb-1.5 h-2.5 w-full border-b border-black bg-[#555]" />
          <div className="flex flex-1 flex-col gap-2.5">
            {LEFT_BAR.map(([group, height, icons, on]) => (
              <div key={group} className="flex flex-col">
                {icons.map((icon) => (
                  <button
                    type="button"
                    key={icon}
                    aria-label={icon}
                    className={`flex w-6 items-center justify-center ${height} ${
                      icon === on ? 'bg-[#6d7c82]' : group === 'select' ? 'bg-[#505050]' : 'bg-transparent'
                    }`}
                  >
                    <Art name={icon} className="size-[18px]" />
                  </button>
                ))}
              </div>
            ))}
          </div>
          <IconButton name="chip" label="Flipbook" art="size-[18px]" />
          <IconButton name="wheel" label="Render" art="size-[18px]" />
        </div>
        <div className="relative flex min-w-0 flex-1 flex-col justify-between overflow-hidden border-b-4 border-[#8a8a8a] p-1 pb-0">
          <SceneDrawing />
          <div className="relative flex justify-end gap-2 text-[11px] leading-[18px] text-[#c5c5c5]">
            <button type="button" className="flex items-center gap-1 rounded-full border border-[#888] bg-[#1d1d1d] px-1.5">Persp <Down className="w-1.5" /></button>
            <button type="button" className="mr-1 flex items-center gap-1 rounded-full border border-[#888] bg-[#1d1d1d] px-1.5">No cam <Down className="w-1.5" /></button>
          </div>
          <p className="relative border border-[#222] bg-[#303030]/95 py-0.5 pr-7 pl-1 text-[10px] leading-[15px] text-[#bebebe]">
            Left mouse tumbles. Middle pans. Right dollies. Ctrl+Alt+Left box-zooms. Ctrl+Right zooms. Spacebar-Ctrl-Left tilts. Hold L for alternate tumble, dolly, and zoom.
          </p>
        </div>
        <div className="flex w-[25px] shrink-0 flex-col items-center bg-[#3c3c3c]">
          <div className="h-2.5 w-full border-b border-black bg-[#555]" />
          {RIGHT_BAR.map((icon, i) => (
            <button
              type="button"
              key={`${icon}${i}`}
              aria-label={icon}
              className={`flex h-[25px] w-5 items-center justify-center text-[10px] ${RIGHT_ON.includes(icon) ? 'bg-[#6a777c]' : 'bg-transparent'}`}
            >
              {icon === '12' || icon === 'abc' ? icon : <Art name={icon} />}
            </button>
          ))}
          <IconButton name="lamp" label="Display light" className="mt-3 h-6 w-5 bg-[#6a777c]" />
          <div className="flex-1" />
          <IconButton name="info" label="Info" />
          <IconButton name="gold" label="Quad view" className="h-6 w-5 bg-[#a19e58]" />
          <IconButton name="eye" label="Display options" />
        </div>
      </div>
    </section>
  );
};

const NetworkHeader = ({ tab, crumbs }) => (
  <div>
    <div className="flex h-[19px] items-center bg-[#323232] text-[10px]">
      <button type="button" className="flex h-full items-center gap-3.5 bg-[#474747] px-2 font-medium text-[#d5d5d5]">
        {tab} <span className="size-1 bg-[#aaa]" />
      </button>
      <button type="button" aria-label="New tab" className="pl-2.5 text-lg leading-4 font-bold text-[#ddd]">+</button>
      <div className="flex-1" />
      <span className="size-2.5 bg-[#ddd]" />
      <span className="px-1.5 pl-3 text-[#ddd]"><Down className="w-1.5" /></span>
    </div>
    <div className="flex h-[34px] items-center bg-[#444]">
      <IconButton name="back" label="Back" className="ml-1 size-6" />
      <IconButton name="forward" label="Forward" className="mr-1 size-6" />
      <PathBox crumbs={crumbs} />
      <IconButton name="link" label="Link" className="ml-2 h-6 w-5 bg-[#7a7a72]" />
      <IconButton name="target" label="Follow" className="mx-1 size-5" />
    </div>
    <div className="flex h-6 items-center border-y border-[#222] bg-[#3c3c3c] text-xs">
      <div className="mr-2.5 ml-1 h-full w-2 border-x border-[#222] bg-[#444]" />
      <nav className="flex gap-3.5">
        {NETWORK_MENU.map((item) => <button type="button" key={item}>{item}</button>)}
      </nav>
      <div className="flex-1" />
      <div className="flex">
        <IconButton name="tools" /><IconButton name="tree" /><IconButton name="list" />
      </div>
      <div className="flex pl-4"><IconButton name="palette" /><IconButton name="cells" /></div>
      <div className="flex pl-4">
        <IconButton name="netbox" /><IconButton name="sticky" /><IconButton name="image" /><IconButton name="crate" />
      </div>
      <div className="flex pl-4"><IconButton name="search" /><IconButton name="eye" /></div>
    </div>
  </div>
);

const MergeNode = ({ name, path, active }) => (
  <div className="flex items-center gap-1">
    <svg viewBox="0 0 76 76" className="size-[76px] shrink-0" aria-hidden="true">
      {active && <circle cx="38" cy="38" r="36" fill="#3f68b0" />}
      {active && <circle cx="38" cy="38" r="23" fill="#9a72c6" />}
      <path d="M2 27h72l-9 22H11z" fill="#dcdcdc" stroke={active ? '#e8e8e8' : '#bdbdbd'} strokeWidth={active ? 3 : 1} />
      {active && <path d="M62 29h10l-7 18h-8z" fill="#2d8bd0" />}
      {active && <path d="M4 28h68l-8 20H12z" fill="none" stroke="#222" />}
      <path d="M14 28l4 20M23 28l2 20M56 28l-4 20M64 28l-5 20" stroke="#8f8f8f" />
      <path d="M32 33h13v14H32z" fill="#cfcfcf" stroke="#777" />
      <path d="M39 29l4 6h-2v4h-4v-4h-2z" fill="#b84a45" />
      <path d="M35 42h7M35 45h7" stroke="#888" />
      <circle cx="38" cy="53" r="3.500" fill={active ? '#e0b8f0' : '#ddd'} />
    </svg>
    <div className="pt-7 whitespace-nowrap">
      <p className="text-sm leading-5 text-[#c6c6c6]">{name}</p>
      <div className="ml-1 size-2 rounded-full border border-[#bbb] bg-[#222]" />
      <p className="pt-1 text-xs leading-5 text-[#6884ad]">{path}</p>
    </div>
  </div>
);

const inputClass = 'h-5 min-w-0 flex-1 border border-[#222] bg-[#141414] px-1 font-[Liberation_Mono,monospace] text-xs text-[#d0d0d0] outline-none';

const Check = ({ id, label, checked, dim }) => (
  <div className={`relative flex items-center gap-2 ${dim ? 'text-[#6c6c6c]' : ''}`}>
    <input
      id={id}
      type="checkbox"
      defaultChecked={checked}
      disabled={dim}
      className={`peer size-3 appearance-none ${dim ? 'bg-[#3c3c3c]' : 'bg-[#161616]'}`}
    />
    <svg viewBox="0 0 12 12" className="pointer-events-none absolute left-0 hidden size-3 peer-checked:block" aria-hidden="true">
      <path d="M2 7l3 4 5-10" fill="none" stroke="#fff" strokeWidth="2" />
    </svg>
    <label htmlFor={id}>{label}</label>
  </div>
);

const ParamPanel = () => (
  <aside className="flex w-[605px] shrink-0 flex-col bg-[#3f3f3f] pt-1 text-[11px] text-[#b5b5b5]">
    <div className="flex h-[22px] shrink-0 items-center border-b border-[#1f1f1f] pl-1.5">
      <Art name="merge" />
      <label htmlFor="node-name" className="px-1 font-bold text-[#cfcfcf]">Object Merge</label>
      <input id="node-name" defaultValue="object_merge2" className={inputClass} />
      <div className="flex">
        <IconButton name="gear" /><IconButton name="houdini" /><IconButton name="search" /><IconButton name="info" /><IconButton name="help" />
      </div>
    </div>
    <div className="flex min-h-0 flex-1">
      <div className="flex h-[300px] min-w-0 flex-1 flex-col overflow-hidden pt-1.5">
        <div className="flex h-5 shrink-0 items-center">
          <label htmlFor="count" className="w-[141px] shrink-0 pr-4 text-right">Number of Objects</label>
          <input id="count" defaultValue="1" className="h-5 w-[145px] border border-[#222] bg-[#141414] px-1 text-[#d0d0d0]" />
          <button type="button" className="h-5 w-[17px] border border-[#222] bg-[#4a4a4a] leading-3 font-bold">+</button>
          <button type="button" className="h-5 w-[17px] border border-[#222] bg-[#4a4a4a] leading-3 font-bold">−</button>
          <button type="button" className="ml-1 h-5 w-14 border border-[#333] bg-[#505050] leading-3">Clear</button>
        </div>
        <div className="mt-2 flex h-5 shrink-0 items-center">
          <div className="flex w-[188px] shrink-0 pl-2">
            <button type="button" className="size-[18px] border border-[#222] bg-[#474747] leading-3 font-bold text-[#ddd]">×</button>
            <button type="button" aria-label="Insert" className="flex size-[18px] items-center justify-center border border-[#222] bg-[#474747]">
              <svg viewBox="0 0 8 12" className="h-3 w-2"><path d="M1 1h6M1 3h6M4 5v6M1 8h6" stroke="#ddd" /></svg>
            </button>
          </div>
          <Check id="enable" label="Enable Merge 1" checked />
        </div>
        <div className="mt-1 flex h-5 shrink-0 items-center pr-[3px]">
          <label htmlFor="object1" className="w-[188px] shrink-0 pr-4 text-right">Object 1</label>
          <input id="object1" defaultValue="../../metal_sim/OUT_geo" className={`${inputClass} font-bold text-white`} />
          <IconButton name="jump" className="ml-0.5 size-6" /><IconButton name="pick" />
        </div>
        <div className="mt-[5px] flex h-5 shrink-0 items-center pr-2">
          <label htmlFor="group1" className="w-[188px] shrink-0 pr-4 text-right">Group 1</label>
          <input id="group1" className={inputClass} />
          <button type="button" aria-label="Groups" className="ml-1 flex h-5 w-4 items-center justify-center bg-[#3a3a3a]"><Down className="w-1.5" /></button>
        </div>
        <div className="mt-[3px] flex h-5 shrink-0 pl-[188px]"><Check id="expand" label="Expand Group 1" dim /></div>
        <div className="mt-[27px] flex h-5 shrink-0 items-center">
          <span className="w-[141px] shrink-0 pr-4 text-right">Transform</span>
          <Picker label="Transform" value="Into Specified Object" className="h-5 w-[151px] border border-[#2a2a2a]" />
        </div>
        <div className="mt-[7px] flex h-5 shrink-0 items-center">
          <label htmlFor="xform" className="w-[141px] shrink-0 pr-4 text-right">Transform Object</label>
          <input id="xform" className={inputClass} />
          <IconButton name="jump" className="ml-0.5 size-6" /><IconButton name="pick" />
        </div>
        <div className="mt-[3px] flex h-5 shrink-0 pl-[141px]"><Check id="invert" label="Invert Transform" dim /></div>
        <div className="flex h-5 shrink-0 pl-[141px]"><Check id="points" label="Create Point Groups" /></div>
        <div className="flex h-6 shrink-0 items-center text-[#6c6c6c]">
          <label htmlFor="prefix" className="w-[141px] shrink-0 pr-4 text-right">Point Group Prefix</label>
          <input id="prefix" disabled placeholder="$NAME_" className="h-5 min-w-0 flex-1 bg-[#393939] px-2 placeholder:text-[#484848]" />
        </div>
        <div className="flex h-6 shrink-0 pl-[141px]"><Check id="prims" label="Create Primitive Groups" /></div>
        <div className="ml-[141px] h-2 shrink-0 bg-[#363636]" />
      </div>
      <div className="flex w-3.5 shrink-0 flex-col items-center bg-[#333] text-[#999]">
        <div className="h-[152px] w-3 bg-[#525252]" />
        <div className="flex-1" />
        <span className="mb-1 flex h-4 w-3 items-center justify-center bg-[#4c4c4c]"><Down className="w-1.5" /></span>
      </div>
    </div>
  </aside>
);

const ObjectNode = ({ node }) => (
  <div className="flex items-center">
    <svg viewBox="0 0 44 24" className="h-6 w-11 shrink-0" aria-hidden="true">
      <circle cx="21" cy="3" r="2" fill="#bbb" />
      <circle cx="21" cy="21" r="2" fill="#bbb" />
      <rect x="2" y="5" width="41" height="14" rx="3" fill="#d8d6cc" />
      <rect x="2" y="5" width="7" height="13" rx="2" fill="#b2c65a" />
      <rect x="35" y="5" width="8" height="13" rx="2" fill="#4d86d0" />
      <path d="M17 8l4 1v6l-4-1zM22 8h4l-2 5z" fill="#7a6d55" />
      <circle cx="25" cy="14" r="2" fill="#c9925a" />
      {node.selected && <rect x="1.500" y="4.500" width="41" height="15" rx="3" fill="none" stroke="#d8d03a" strokeWidth="2" />}
    </svg>
    <div className="pb-2 leading-[8px] whitespace-nowrap">
      <p className="text-[7px] text-[#4c4c4c]">Geometry</p>
      <p className="text-[8px] text-[#9c9c9c]">{node.name}</p>
    </div>
  </div>
);

const Networks = () => (
  <section className="flex min-w-0 flex-1 flex-col border-l-2 border-[#4a4a4a] bg-[#333]">
    <NetworkHeader tab="/obj/post_sim" crumbs={[['scene', 'obj'], ['geo', 'post_sim']]} />
    <div className="flex h-[335px]">
      <div className="relative min-w-0 flex-1 overflow-hidden">
        <h2 className="pt-3 pr-4 text-right text-[22px] leading-9 font-bold text-[#555]">Geometry</h2>
        <div className="absolute top-[92px] left-[45px]"><MergeNode name="object_merge1" path="../../glass_wood_sim/OUT_geo" /></div>
        <div className="absolute top-[92px] left-[274px]"><MergeNode name="object_merge2" path="../../metal_sim/OUT_geo" active /></div>
      </div>
      <ParamPanel />
    </div>
    <div className="h-1.5 border-y border-[#333] bg-[#555]" />
    <NetworkHeader tab="/obj" crumbs={[['scene', 'obj']]} />
    <div className="relative min-h-[300px] flex-1 overflow-hidden">
      <h2 className="pt-3 pr-3 text-right text-[22px] leading-9 font-bold text-[#555]">Objects</h2>
      {OBJECT_NODES.map((node) => (
        <div key={node.name} style={{ top: node.top - 4 }} className="absolute left-[435px]"><ObjectNode node={node} /></div>
      ))}
      <svg viewBox="0 0 14 20" className="absolute top-[54px] left-[483px] h-5 w-3.5" aria-hidden="true">
        <path d="M1 0v16l4-4 3 7 3-1-3-7h5z" fill="#fff" stroke="#111" />
      </svg>
    </div>
  </section>
);

const FRAMES = Array.from({ length: 100 }, (_, i) => i + 1);

const Timeline = () => {
  const [frame] = useState(48);
  return (
    <section className="flex h-[70px] shrink-0 border-t-2 border-[#5a5a5a] bg-[#353535] text-xs">
      <div className="mr-1.5 ml-0.5 w-2 shrink-0 border-r border-black bg-[#444]" />
      <div className="flex w-[216px] shrink-0 flex-col gap-2 pt-[7px]">
        <div className="flex h-[27px] items-stretch">
          {['first', 'reverse', 'stop', 'play', 'last'].map((name) => (
            <IconButton
              key={name}
              name={name}
              className={name === 'stop' ? 'w-[27px] border border-[#222] bg-[#8b9ba3]' : 'w-[27px] border border-[#222] bg-[#4a4a4a]'}
            />
          ))}
          <input aria-label="Frame" defaultValue={frame} className="ml-1 w-12 bg-[#161616] px-1 text-[#ccc]" />
          <IconButton name="stepBack" className="w-3.5 bg-[#484848]" />
          <IconButton name="stepNext" className="ml-px w-3.5 bg-[#484848]" />
        </div>
        <div className="flex h-[23px] items-stretch">
          <IconButton name="record" className="w-[27px] border border-[#222] bg-[#4a4a4a]" />
          <IconButton name="sound" className="w-[27px] border border-[#222] bg-[#4a4a4a]" />
          <IconButton name="realtime" className="w-[27px] border border-[#222] bg-[#4a4a4a]" />
          <IconButton name="clock" className="w-[27px] bg-[#8b9599]" />
          <IconButton name="prevKey" className="ml-1 w-6 bg-[#3b3b3b]" />
          <IconButton name="nextKey" className="w-6 bg-[#3b3b3b]" />
        </div>
      </div>
      <div className="flex min-w-0 flex-1 flex-col pl-1">
        <div className="relative h-[42px]">
          <div className="h-3 border-b border-[#552a24]" />
          <div className="h-3 border-b-2 border-[#7db2e8] bg-[#1b67bf]" />
          <div className="flex h-1">
            {FRAMES.map((f) => <span key={f} className="h-full flex-1 border-l border-[#7f97ad] bg-[#2c4765]/60" />)}
          </div>
          {FRAMES.filter((f) => f % 12 === 0 || f === 1).map((f) => (
            <div key={f} style={{ left: `${f - 1}%` }} className="absolute top-0 flex h-7 flex-col justify-between text-[10px] leading-[10px] text-[#8e8e8e]">
              <span>{f}</span>
              <span className="h-3.5 w-px bg-[#9cc3ea]" />
            </div>
          ))}
          <div style={{ left: `${frame - 1}%` }} className="absolute top-0 -translate-x-1/2 border-2 border-[#ccc] bg-black px-[3px] text-sm leading-4 text-[#ddd]">
            {frame}
          </div>
          <svg viewBox="0 0 10 6" style={{ left: `${frame - 1}%` }} className="absolute top-[18px] h-1.5 w-2.5 -translate-x-1/2" aria-hidden="true">
            <path d="M0 0l5 5 5-5" fill="#000" stroke="#ccc" strokeWidth="1.500" />
          </svg>
        </div>
        <div className="flex h-5 items-center text-xs text-[#ccc]">
          <input aria-label="Global start" defaultValue="1" className="h-5 w-11 bg-[#2e2e2e] px-1" />
          <input aria-label="Range start" defaultValue="1" className="ml-0.5 h-5 w-10 bg-[#161616] px-1" />
          <svg viewBox="0 0 8 12" className="h-3 w-2"><path d="M0 0l8 6-8 6z" fill="#aaa" /></svg>
          <div className="h-[3px] flex-1 bg-[#777]" />
          <svg viewBox="0 0 8 12" className="h-3 w-2"><path d="M8 0L0 6l8 6z" fill="#aaa" /></svg>
          <input aria-label="Range end" defaultValue="100" className="h-5 w-10 bg-[#161616] px-1.5" />
          <input aria-label="Global end" defaultValue="100" className="ml-1.5 h-5 w-10 bg-[#2e2e2e] px-1" />
        </div>
      </div>
      <div className="flex w-[66px] shrink-0 items-center gap-0.5 pl-1">
        <IconButton name="key" label="Set key" className="size-9 rounded-full bg-[#4c4c4c]" art="size-5" />
        <button type="button" aria-label="Key options" className="flex h-[18px] w-4 items-center justify-center bg-[#444] text-[#999]"><Down /></button>
      </div>
      <div className="flex w-[186px] shrink-0 flex-col gap-1 pt-[7px] text-[11px]">
        <div className="flex h-6">
          <IconButton name="scope" className="w-6 bg-[#555]" />
          <button type="button" className="ml-1.5 flex flex-1 items-center justify-between border border-[#2a2a2a] bg-[#4b4b4b] pr-1.5 pl-3.5">
            0 keys, 9/9 channels
            <svg viewBox="0 0 8 8" className="size-2"><path d="M4 1l4 6H0z" fill="#777" /></svg>
          </button>
          <span className="w-1.5" />
        </div>
        <div className="flex h-6">
          <IconButton name="graph" className="w-6 bg-[#555]" />
          <Picker label="Key mode" value="Key All Channels" className="ml-1 h-6 flex-1 border border-[#2a2a2a]" />
          <span className="w-1" />
        </div>
      </div>
    </section>
  );
};

const StatusBar = () => (
  <footer className="flex h-[26px] justify-end bg-[#1e1e1e] text-[11px]">
    <div className="flex w-[300px] items-center bg-[#3b3b3b]">
      <IconButton name="brain" label="Caches" />
      <Picker label="Cook path" value="/obj/glass_woo..." className="h-full w-[132px]" pad="pl-3.5" />
      <IconButton name="refresh" label="Refresh" />
      <Picker label="Update mode" value="Auto Update" className="h-full flex-1" pad="pl-3.5" />
    </div>
  </footer>
);

const Marks = () => (
  <div className="pointer-events-none absolute inset-0 overflow-hidden select-none" aria-hidden="true">
    {MARKS.map(([text, x, y]) => (
      <span
        key={`${text}${x}`}
        style={{ left: x, top: y }}
        className={`absolute -translate-x-1/2 -translate-y-1/2 -rotate-[26deg] leading-none font-bold whitespace-nowrap text-white opacity-9 [-webkit-text-stroke:2px_white] ${
          text === 'RRCG' ? 'font-[Liberation_Serif,serif] text-[62px]' : 'text-[66px]'
        }`}
      >
        {text}
      </span>
    ))}
    <span className="absolute top-[12px] left-1/2 -translate-x-1/2 pl-4 font-[Noto_Sans,sans-serif] text-5xl leading-[50px] font-semibold text-[#7d7d7d]">RRCG</span>
    <div className="absolute bottom-3 left-1/2 flex -translate-x-1/2 items-center gap-2.5">
      <svg viewBox="0 0 44 44" className="size-11">
        <circle cx="22" cy="22" r="19" fill="#16222f" stroke="#686868" strokeWidth="4" strokeDasharray="100 20" strokeDashoffset="-14" />
        <path d="M9 30l7-17 6 14 5-13 5 16h8" fill="none" stroke="#3465a0" strokeWidth="4" />
      </svg>
      <span className="text-[33px] leading-10 font-bold text-[#808080]">人人素材</span>
    </div>
  </div>
);

const App = () => (
  <div className="relative flex min-h-screen flex-col overflow-hidden bg-[#030303] pt-[33px] pb-[30px] font-['Noto_Sans_CJK_SC',sans-serif] text-[#bdbdbd]">
    <MenuBar />
    <Shelves />
    <main className="flex flex-1">
      <ScenePane />
      <Networks />
    </main>
    <Timeline />
    <StatusBar />
    <Marks />
  </div>
);

export default App;
